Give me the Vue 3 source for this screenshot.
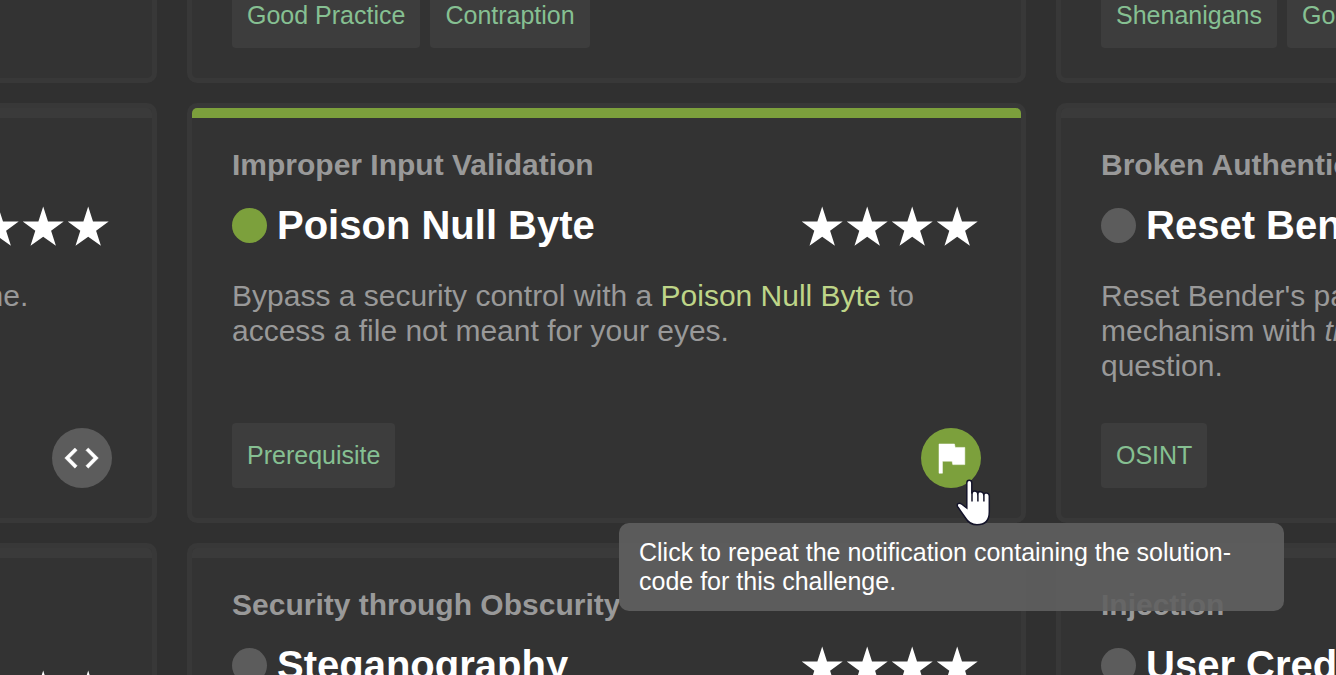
<script setup>
const cards = [
  { id: 'a1' },
  { id: 'a2', tags: ['Good Practice', 'Contraption'] },
  { id: 'a3', tags: ['Shenanigans', 'Good for Demos'] },
  {
    id: 'b1', category: 'Injection', name: 'NoSQL Manipulation', stars: 4, action: 'code',
    text: [{ t: 'Update multiple product reviews at the same time.' }],
  },
  {
    id: 'b2', category: 'Improper Input Validation', name: 'Poison Null Byte', stars: 4, solved: true,
    tags: ['Prerequisite'], action: 'flag',
    text: [
      { t: 'Bypass a security control with a ' },
      { t: 'Poison Null Byte', kind: 'link' },
      { t: ' to access a file not meant for your eyes.' },
    ],
  },
  {
    id: 'b3', category: 'Broken Authentication', name: "Reset Bender's Password", stars: 4, tags: ['OSINT'],
    text: [
      { t: "Reset Bender's password via the Forgot Password mechanism with " },
      { t: 'truthful answer', kind: 'em' },
      { t: ' to his own security question.' },
    ],
  },
  { id: 'c1', category: 'XSS', name: 'Server-side XSS Protection for Feedback', stars: 4 },
  { id: 'c2', category: 'Security through Obscurity', name: 'Steganography', stars: 4 },
  { id: 'c3', category: 'Injection', name: 'User Credentials', stars: 4 },
]
const tip = 'Click to repeat the notification containing the solution-code for this challenge.'
</script>

<template>
  <main class="viewport">
    <div class="board">
      <article v-for="card in cards" :key="card.id" class="card" :class="{ solved: card.solved }">
        <div class="bar"></div>
        <div class="content">
          <template v-if="card.name">
            <div class="category">{{ card.category }}</div>
            <div class="heading">
              <span class="dot"></span>
              <h2 class="name">{{ card.name }}</h2>
              <span class="stars" role="img" :aria-label="card.stars + ' stars'">
                <svg v-for="n in card.stars" :key="n" class="star" viewBox="0 0 45 45">
                  <path d="M21.2 3.6 L26 18.4 L41.7 18.4 L29.1 27.8 L33.9 42.8 L21.2 33.7 L8.5 42.8 L13.3 27.8 L0.7 18.4 L16.4 18.4 Z" />
                </svg>
              </span>
            </div>
          </template>
          <p v-if="card.text" class="text">
            <template v-for="(part, i) in card.text" :key="i">
              <a v-if="part.kind === 'link'" href="#">{{ part.t }}</a>
              <em v-else-if="part.kind === 'em'">{{ part.t }}</em>
              <template v-else>{{ part.t }}</template>
            </template>
          </p>
          <div class="footer">
            <span v-for="tag in card.tags" :key="tag" class="tag">{{ tag }}</span>
            <div v-if="card.action" class="action">
              <button v-if="card.action === 'code'" class="round" type="button" aria-label="Coding challenge">
                <svg viewBox="0 0 60 60">
                  <path transform="translate(9.4 9.9) scale(1.68)" d="M9.4 16.6 4.8 12l4.6-4.6L8 6l-6 6 6 6 1.4-1.4zm5.2 0 4.6-4.6-4.6-4.6L16 6l6 6-6 6-1.4-1.4z" />
                </svg>
              </button>
              <button v-else class="round green" type="button" aria-label="Repeat notification" aria-describedby="flag-tip">
                <svg viewBox="0 0 60 60">
                  <path transform="translate(9.4 9.1) scale(1.72)" d="M14.4 6 14 4H5v17h2v-7h5.6l.4 2h7V6z" />
                </svg>
              </button>
              <div v-if="card.action === 'flag'" id="flag-tip" class="tooltip" role="tooltip">{{ tip }}</div>
              <svg v-if="card.action === 'flag'" class="pointer" viewBox="0 0 36 48" aria-hidden="true">
                <path d="M11.8 5 C11.8 1.4 16.8 1.4 16.8 5 V15.5 C17.5 12.2 22 12.4 22.6 15.2 C23.4 12.8 28 13.2 28.6 16.2 C30.2 14 34.3 15 34.3 18 V34 C34.3 42.5 30 46.8 22 46.8 C16.5 46.8 13.2 44.5 10.5 40 L2.8 29 C0.8 26 4.2 24.3 6.5 26 L11.8 30 Z" />
                <path d="M17 14 V23.5 M22.9 15 V23.5 M28.9 16 V23.5" />
              </svg>
            </div>
          </div>
        </div>
      </article>
    </div>
  </main>
</template>

<style>
body {
  margin: 0;
  background: #303030;
}
</style>

<style scoped>
.viewport {
  height: 100vh;
  overflow: hidden;
  font-family: "Liberation Sans", Arial, sans-serif;
  color: #999;
}
.board {
  display: grid;
  grid-template-columns: repeat(3, minmax(0, 1fr));
  grid-auto-rows: minmax(420px, auto);
  gap: 20px 30px;
  width: calc(100% + 1241px);
  margin: -337px 0 0 -682px;
}
.card {
  display: flex;
  flex-direction: column;
  box-sizing: border-box;
  border: 5px solid #383838;
  border-radius: 10px;
  background: #333;
}
.bar {
  height: 10px;
  border-radius: 5px 5px 0 0;
  background: #3a3a3a;
}
.solved .bar {
  background: #7ca03c;
}
.content {
  flex: 1;
  display: flex;
  flex-direction: column;
  padding: 29px 40px 30px;
}
.category {
  font-size: 30px;
  line-height: 35px;
  font-weight: 700;
}
.heading {
  display: flex;
  align-items: center;
  margin-top: 19px;
}
.dot {
  flex: none;
  width: 35px;
  height: 35px;
  margin-right: 10px;
  border-radius: 50%;
  background: #5c5c5c;
}
.solved .dot {
  background: #7ca03c;
}
.name {
  margin: 0;
  font-size: 40px;
  line-height: 48px;
  color: #fff;
}
.stars {
  flex: none;
  display: flex;
  margin-left: auto;
}
.star {
  width: 45px;
  height: 45px;
  fill: #fff;
}
.text {
  margin: 29px 0 0;
  font-size: 30px;
  line-height: 35px;
}
.text a {
  color: #bed588;
  text-decoration: none;
}
.footer {
  display: flex;
  gap: 10px;
  margin-top: auto;
}
.tag {
  padding: 15px;
  border-radius: 4px;
  background: #3d3d3d;
  color: #86c092;
  font-size: 25px;
  line-height: 35px;
}
.action {
  position: relative;
  margin: 5px 0 0 auto;
}
.round {
  display: block;
  width: 60px;
  height: 60px;
  padding: 0;
  border: 0;
  border-radius: 50%;
  background: #5c5c5c;
  cursor: pointer;
}
.round.green {
  background: #7ca03c;
}
.round svg {
  display: block;
  fill: #fff;
  stroke: #fff;
  stroke-width: 0.3;
}
.tooltip {
  position: absolute;
  z-index: 2;
  top: 95px;
  left: -302px;
  box-sizing: border-box;
  width: 665px;
  padding: 15px 20px;
  border-radius: 10px;
  background: rgba(97, 97, 97, 0.9);
  color: #fff;
  font-size: 25px;
  line-height: 29px;
}
.pointer {
  position: absolute;
  z-index: 3;
  top: 50px;
  left: 34px;
  width: 36px;
  height: 48px;
  fill: #fff;
  stroke: #14142a;
  stroke-width: 1.5;
}
</style>
